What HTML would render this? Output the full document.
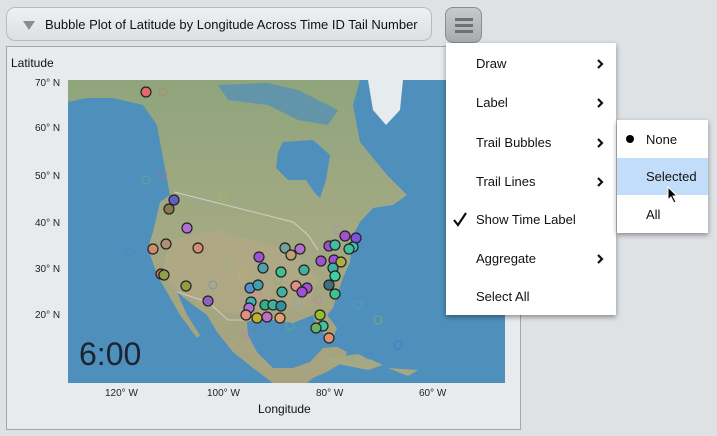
<!DOCTYPE html>
<html><head><style>
body{margin:0;width:717px;height:436px;background:#dfe2e5;font-family:"Liberation Sans",sans-serif;position:relative;overflow:hidden}
.title{position:absolute;left:6px;top:7px;width:426px;height:34px;border:1px solid #b7bbbf;border-radius:9px;background:linear-gradient(#eef0f2,#dde0e3);box-sizing:border-box;font-size:13px;line-height:34px;color:#111}
.title .tri{position:absolute;left:16px;top:13px;width:0;height:0;border-left:6px solid transparent;border-right:6px solid transparent;border-top:9px solid #8a8d90}
.title span{position:absolute;left:38px;top:0}
.hb{position:absolute;left:445px;top:7px;width:37px;height:36px;border:1px solid #8a8d90;border-radius:8px;background:linear-gradient(#c7cacd,#a9acaf);box-sizing:border-box}
.hb i{position:absolute;left:9px;width:18px;height:3px;background:#6e7174}
.panel{position:absolute;left:6px;top:46px;width:515px;height:384px;border:1px solid #a3a7ab;box-sizing:border-box;background:#e8ebed}
.lbl{position:absolute;font-size:12px;color:#111}
.tk{position:absolute;font-size:10px;color:#222}
.menu{position:absolute;left:446px;top:43px;width:170px;height:272px;background:#fff;box-shadow:0 2px 5px rgba(0,0,0,.4);font-size:13px;color:#111}
.menu div{position:absolute;left:30px}
.menu svg.ch{position:absolute;left:150px}
.sub{position:absolute;left:617px;top:120px;width:91px;height:113px;background:#fff;box-shadow:0 2px 5px rgba(0,0,0,.4);font-size:13px;color:#111}
</style></head><body>
<div class="title"><div class="tri"></div><span>Bubble Plot of Latitude by Longitude Across Time ID Tail Number</span></div>
<div class="hb"><i style="top:10px"></i><i style="top:16px"></i><i style="top:22px"></i></div>
<div class="panel"></div>
<div class="lbl" style="left:11px;top:56px">Latitude</div>
<div class="tk" style="left:35px;top:78px">70° N</div>
<div class="tk" style="left:35px;top:123px">60° N</div>
<div class="tk" style="left:35px;top:171px">50° N</div>
<div class="tk" style="left:35px;top:218px">40° N</div>
<div class="tk" style="left:35px;top:264px">30° N</div>
<div class="tk" style="left:35px;top:310px">20° N</div>
<svg style="position:absolute;left:68px;top:80px" width="437" height="303" viewBox="0 0 437 303">
<defs><linearGradient id="lg" x1="0" y1="0" x2="0" y2="1"><stop offset="0" stop-color="#8fa57c"/><stop offset=".5" stop-color="#a3a983"/><stop offset="1" stop-color="#a8a27f"/></linearGradient></defs>
<rect width="437" height="303" fill="#4f8fbc"/>
<path d="M0 0 L292 0 L285 25 L292 62 L319 95 L339 115 L325 125 L305 128 L292 142 L285 155 L282 182 L275 198 L269 215 L265 228 L259 235 L269 248 L265 258 L259 258 L249 245 L245 235 L225 243 L192 238 L179 242 L180 255 L189 272 L205 288 L225 288 L242 282 L255 268 L269 267 L279 272 L275 282 L259 292 L245 298 L239 303 L205 303 L185 288 L165 272 L149 252 L139 235 L125 225 L109 212 L119 235 L132 255 L129 258 L112 235 L99 212 L89 195 L80 168 L85 152 L92 122 L102 115 L95 78 L89 45 L75 25 L45 18 L19 18 L0 22 Z" fill="url(#lg)"/>
<path d="M100 160 L150 150 L200 165 L230 175 L250 200 L240 225 L200 232 L170 235 L140 228 L110 212 L95 195 Z" fill="#b6a887" opacity=".6"/>
<path d="M215 62 L245 60 L262 75 L258 100 L252 118 L246 112 L238 100 L220 100 L208 88 L210 72 Z" fill="#4f8fbc"/>
<path d="M150 5 L200 3 L230 10 L270 30 L260 45 L230 40 L200 25 L160 20 Z" fill="#4f8fbc" opacity=".7"/>
<path d="M300 0 L335 0 L332 30 L318 45 L305 30 Z" fill="#e6ecee"/>
<path d="M248 280 L290 274 L315 285 L300 290 L270 284 Z M320 288 L350 290 L340 296 Z" fill="#a3a983"/>
<path d="M106 112 L225 142 L240 155 L250 170" stroke="#d8dcd8" stroke-width="1" fill="none" opacity=".8"/>
<path d="M109 212 L140 222 L160 240 L180 240" stroke="#d8dcd8" stroke-width="1" fill="none" opacity=".7"/>
<g fill="none" stroke-width=".8" opacity=".55">
<circle cx="120" cy="150" r="4" stroke="#c070e0"/><circle cx="140" cy="175" r="4" stroke="#e08070"/><circle cx="160" cy="185" r="4" stroke="#70c070"/><circle cx="175" cy="195" r="4" stroke="#c0c040"/><circle cx="210" cy="200" r="4" stroke="#40c080"/><circle cx="230" cy="222" r="4" stroke="#40b0e0"/><circle cx="250" cy="220" r="4" stroke="#c070e0"/><circle cx="290" cy="225" r="4" stroke="#40c0b0"/><circle cx="310" cy="240" r="4" stroke="#c0c040"/><circle cx="330" cy="265" r="4" stroke="#4060e0"/><circle cx="300" cy="275" r="4" stroke="#4080e0"/><circle cx="78" cy="100" r="4" stroke="#70c070"/><circle cx="95" cy="95" r="4" stroke="#e06060"/><circle cx="62" cy="172" r="4" stroke="#4080e0"/><circle cx="155" cy="118" r="4" stroke="#c0c040"/><circle cx="180" cy="255" r="4" stroke="#c070e0"/><circle cx="222" cy="246" r="4" stroke="#70c070"/><circle cx="270" cy="150" r="4" stroke="#c070e0"/><circle cx="145" cy="205" r="4" stroke="#4080e0"/><circle cx="190" cy="215" r="4" stroke="#e08070"/><circle cx="95" cy="12" r="4" stroke="#e06060"/>
</g>
<g stroke="#222" stroke-width="1.2">
<circle cx="78" cy="12" r="5" fill="#e06a6a"/>
<circle cx="101" cy="129" r="5" fill="#8a7a50"/><circle cx="106" cy="120" r="5" fill="#6060c0"/>
<circle cx="119" cy="148" r="5" fill="#b070d0"/><circle cx="85" cy="169" r="5" fill="#d08a70"/>
<circle cx="98" cy="164" r="5" fill="#b09070"/><circle cx="130" cy="168" r="5" fill="#d09070"/>
<circle cx="93" cy="194" r="5" fill="#c07060"/><circle cx="96" cy="195" r="5" fill="#90a050"/>
<circle cx="118" cy="206" r="5" fill="#90a040"/><circle cx="140" cy="221" r="5" fill="#9060c0"/>
<circle cx="191" cy="177" r="5" fill="#a050d0"/><circle cx="217" cy="168" r="5" fill="#70a0a0"/>
<circle cx="223" cy="175" r="5" fill="#c0a070"/><circle cx="232" cy="169" r="5" fill="#b070d0"/>
<circle cx="195" cy="188" r="5" fill="#50a0b0"/><circle cx="213" cy="192" r="5" fill="#40c090"/>
<circle cx="236" cy="190" r="5" fill="#40b0a0"/><circle cx="182" cy="208" r="5" fill="#5090d0"/>
<circle cx="190" cy="205" r="5" fill="#40a0b0"/><circle cx="214" cy="212" r="5" fill="#40b0a0"/>
<circle cx="228" cy="206" r="5" fill="#e09080"/><circle cx="239" cy="208" r="5" fill="#a050d0"/>
<circle cx="234" cy="212" r="5" fill="#a050d0"/><circle cx="183" cy="222" r="5" fill="#40b0b0"/>
<circle cx="181" cy="228" r="5" fill="#b070d0"/><circle cx="197" cy="225" r="5" fill="#30b080"/>
<circle cx="205" cy="225" r="5" fill="#40b0a0"/><circle cx="213" cy="226" r="5" fill="#3090a0"/>
<circle cx="178" cy="235" r="5" fill="#e09080"/><circle cx="189" cy="238" r="5" fill="#c0b030"/>
<circle cx="199" cy="237" r="5" fill="#c070c0"/><circle cx="212" cy="238" r="5" fill="#e0a070"/>
<circle cx="253" cy="181" r="5" fill="#a050d0"/><circle cx="261" cy="166" r="5" fill="#a050d0"/>
<circle cx="267" cy="165" r="5" fill="#40c0a0"/><circle cx="277" cy="156" r="5" fill="#a050d0"/>
<circle cx="288" cy="158" r="5" fill="#8050e0"/><circle cx="285" cy="167" r="5" fill="#40c0b0"/>
<circle cx="281" cy="169" r="5" fill="#40c0a0"/><circle cx="266" cy="180" r="5" fill="#a050d0"/>
<circle cx="273" cy="182" r="5" fill="#b0b040"/><circle cx="265" cy="188" r="5" fill="#40b0a0"/>
<circle cx="267" cy="196" r="5" fill="#40d0a0"/><circle cx="261" cy="205" r="5" fill="#407080"/>
<circle cx="267" cy="214" r="5" fill="#40c090"/><circle cx="252" cy="235" r="5" fill="#90c030"/>
<circle cx="255" cy="246" r="5" fill="#40c0a0"/><circle cx="248" cy="248" r="5" fill="#70b060"/>
<circle cx="261" cy="258" r="5" fill="#e09070"/>
</g>
<text x="11" y="285" font-family="Liberation Sans" font-size="32" fill="#1a2530">6:00</text>
</svg>
<div class="tk" style="left:105px;top:388px">120° W</div>
<div class="tk" style="left:207px;top:388px">100° W</div>
<div class="tk" style="left:316px;top:388px">80° W</div>
<div class="tk" style="left:419px;top:388px">60° W</div>
<div class="lbl" style="left:258px;top:402px">Longitude</div>
<div class="menu">
<div style="top:13px">Draw</div><svg class="ch" style="top:15px" width="8" height="12"><path d="M2 2 L6 6 L2 10" stroke="#111" stroke-width="2.2" fill="none"/></svg>
<div style="top:52px">Label</div><svg class="ch" style="top:54px" width="8" height="12"><path d="M2 2 L6 6 L2 10" stroke="#111" stroke-width="2.2" fill="none"/></svg>
<div style="top:92px">Trail Bubbles</div><svg class="ch" style="top:94px" width="8" height="12"><path d="M2 2 L6 6 L2 10" stroke="#111" stroke-width="2.2" fill="none"/></svg>
<div style="top:131px">Trail Lines</div><svg class="ch" style="top:133px" width="8" height="12"><path d="M2 2 L6 6 L2 10" stroke="#111" stroke-width="2.2" fill="none"/></svg>
<svg style="position:absolute;left:6px;top:168px" width="16" height="16"><path d="M2 9 L6 14 L14 2" stroke="#111" stroke-width="2.2" fill="none"/></svg><div style="top:169px">Show Time Label</div>
<div style="top:208px">Aggregate</div><svg class="ch" style="top:210px" width="8" height="12"><path d="M2 2 L6 6 L2 10" stroke="#111" stroke-width="2.2" fill="none"/></svg>
<div style="top:246px">Select All</div>
</div>
<div class="sub">
<div style="position:absolute;left:9px;top:15px;width:8px;height:8px;border-radius:50%;background:#000"></div>
<div style="position:absolute;left:29px;top:12px">None</div>
<div style="position:absolute;left:0;top:38px;width:91px;height:37px;background:#c2ddfa"></div>
<div style="position:absolute;left:29px;top:49px">Selected</div>
<div style="position:absolute;left:29px;top:87px">All</div>
<svg style="position:absolute;left:50px;top:66px" width="12" height="18"><path d="M1 1 L1 14 L4 11 L7 17 L9 16 L6 10 L10 10 Z" fill="#000" stroke="#fff" stroke-width="1"/></svg>
</div>
</body></html>
